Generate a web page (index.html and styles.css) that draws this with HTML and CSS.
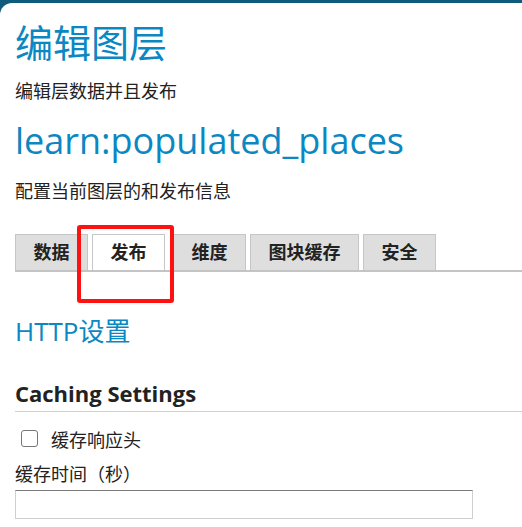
FILE: index.html
```html
<!DOCTYPE html>
<html lang="zh">
<head>
<meta charset="utf-8">
<link rel="stylesheet" href="styles.css">
</head>
<body>
<div class="page">
  <h1 class="title">编辑图层</h1>
  <p class="desc">编辑层数据并且发布</p>
  <h2 class="layer">learn:populated_places</h2>
  <p class="desc desc2">配置当前图层的和发布信息</p>
  <div class="tabs-wrap">
    <ul class="tabs">
      <li class="tab">数据</li>
      <li class="tab tab-active">发布</li>
      <li class="tab">维度</li>
      <li class="tab">图块缓存</li>
      <li class="tab">安全</li>
    </ul>
    <div class="highlight"></div>
  </div>
  <h3 class="section">HTTP设置</h3>
  <h4 class="subsection">Caching Settings</h4>
  <label class="check-row"><input type="checkbox" class="check"><span>缓存响应头</span></label>
  <label class="field-label" for="cacheAge">缓存时间（秒）</label>
  <input id="cacheAge" class="text-input" type="text">
</div>
</body>
</html>
```

FILE: styles.css
```css
html, body {
  margin: 0;
  padding: 0;
}
body {
  background: #0f5b7b;
  font-family: "Open Sans", "Noto Sans CJK SC", sans-serif;
  color: #222;
}
.page {
  margin-top: 3px;
  background: #fff;
  border-top-left-radius: 12px;
  min-height: 524px;
  padding-left: 15px;
  overflow: hidden;
}
.title {
  margin: 14px 0 0;
  font-size: 38px;
  line-height: 50px;
  font-weight: 400;
  color: #0b87c2;
}
.desc {
  margin: 12px 0 0;
  font-size: 18px;
  line-height: 24px;
}
.layer {
  margin: 15px 0 0;
  font-size: 36px;
  line-height: 46px;
  font-weight: 400;
  color: #0b87c2;
}
.desc2 {
  margin-top: 15px;
}
.tabs-wrap {
  position: relative;
  margin-top: 31px;
}
.tabs {
  list-style: none;
  margin: 0;
  padding: 0;
  display: flex;
  border-bottom: 2px solid #c4c4c4;
}
.tab {
  height: 35px;
  line-height: 35px;
  padding: 0 17.5px;
  margin-right: 4px;
  background: #dedede;
  border: 1px solid #c6c6c6;
  border-bottom: none;
  font-size: 18px;
  font-weight: 700;
  color: #222;
}
.tab-active {
  background: #fff;
  margin-right: 8px;
}
.highlight {
  position: absolute;
  left: 62px;
  top: -9px;
  width: 89px;
  height: 70px;
  border: 4px solid #ff1111;
  border-radius: 3px;
}
.section {
  margin: 43px 0 0;
  font-size: 26px;
  line-height: 32px;
  font-weight: 400;
  color: #0b87c2;
}
.subsection {
  margin: 32px 0 0;
  padding-bottom: 4px;
  font-size: 22px;
  line-height: 28px;
  font-weight: 700;
  border-bottom: 1px solid #c6e09c;
}
.check-row {
  display: flex;
  align-items: center;
  margin-top: 16px;
  font-size: 18px;
  line-height: 24px;
}
.check {
  appearance: none;
  -webkit-appearance: none;
  width: 17px;
  height: 17px;
  margin: -4px 13px 0 6px;
  border: 1.5px solid #777;
  border-radius: 3px;
  background: #fff;
  box-sizing: border-box;
}
.field-label {
  display: block;
  margin-top: 10px;
  font-size: 18px;
  line-height: 24px;
}
.text-input {
  display: block;
  box-sizing: border-box;
  margin-top: 4px;
  width: 458px;
  height: 29px;
  border: 1px solid #cfcfcf;
  border-top-color: #7a7a7a;
  padding: 0;
}
```
